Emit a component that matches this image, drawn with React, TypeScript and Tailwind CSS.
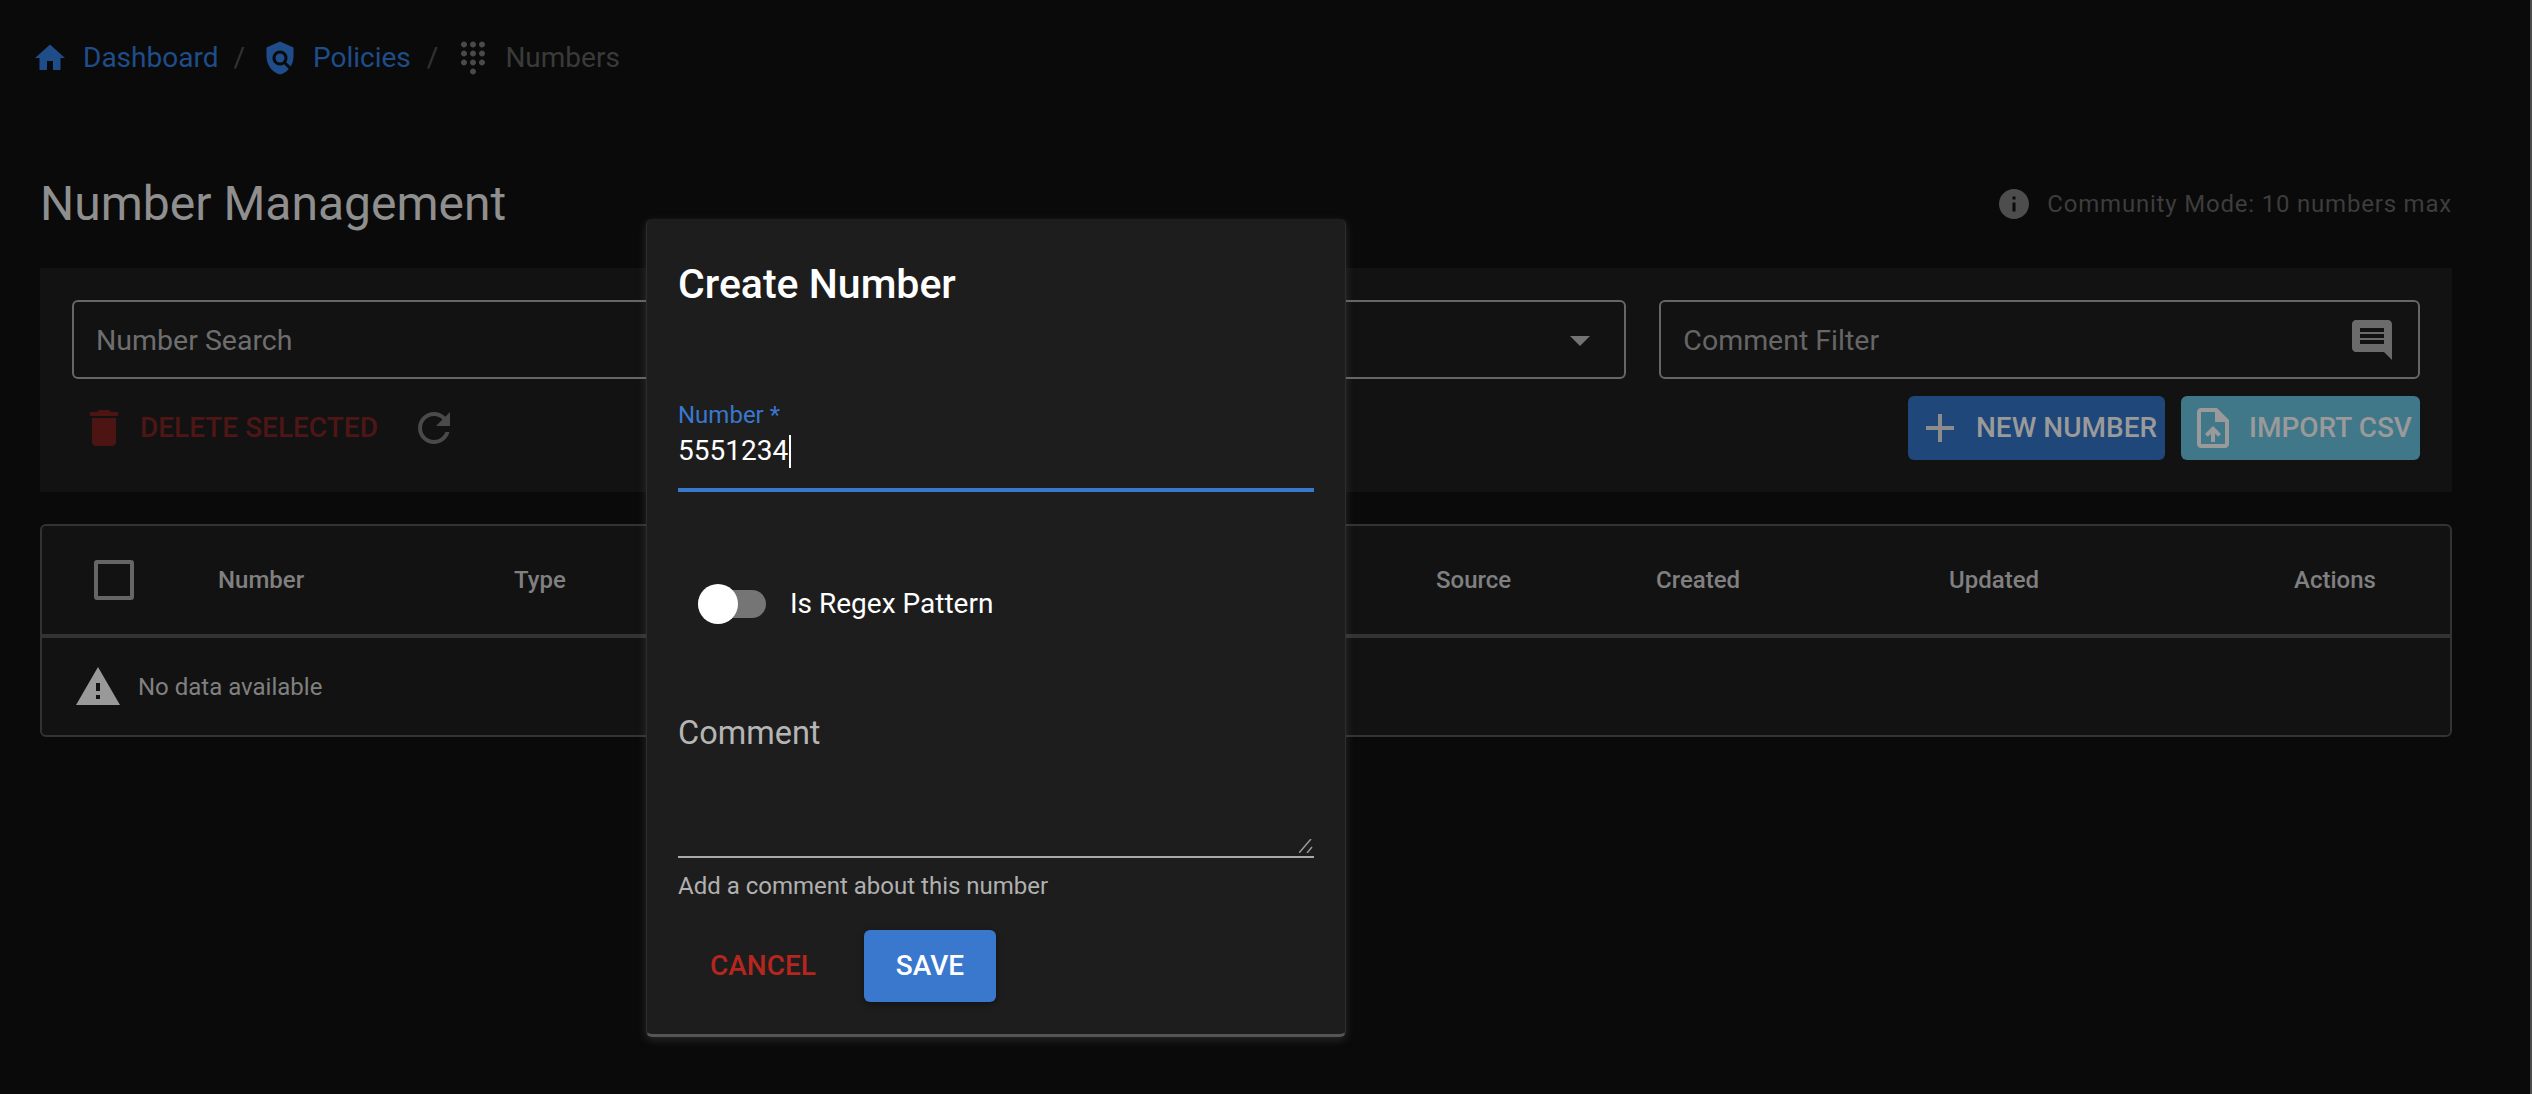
const Icon = ({ d, size = 48, className = "", children }: { d: string; size?: number; className?: string; children?: React.ReactNode }) => (
  <svg viewBox="0 0 24 24" width={size} height={size} fill="currentColor" className={`shrink-0 ${className}`}>
    <path d={d} />
    {children}
  </svg>
);

const P = {
  home: "M10 20v-6h4v6h5v-8h3L12 3 2 12h3v8z",
  policy: "M21 5l-9-4-9 4v6c0 5.55 3.84 10.74 9 12 2.3-.56 4.33-1.9 5.88-3.71l-3.12-3.12c-1.94 1.29-4.58 1.07-6.29-.64-1.95-1.95-1.95-5.12 0-7.07 1.95-1.95 5.12-1.95 7.07 0 1.71 1.71 1.92 4.35.64 6.29l2.9 2.9C20.29 15.69 21 13.38 21 11V5z",
  dialpad: "M12 19c-1.1 0-2 .9-2 2s.9 2 2 2 2-.9 2-2-.9-2-2-2zM6 1c-1.1 0-2 .9-2 2s.9 2 2 2 2-.9 2-2-.9-2-2-2zm0 6c-1.1 0-2 .9-2 2s.9 2 2 2 2-.9 2-2-.9-2-2-2zm0 6c-1.1 0-2 .9-2 2s.9 2 2 2 2-.9 2-2-.9-2-2-2zm12-8c1.1 0 2-.9 2-2s-.9-2-2-2-2 .9-2 2 .9 2 2 2zm-6 8c-1.1 0-2 .9-2 2s.9 2 2 2 2-.9 2-2-.9-2-2-2zm6 0c-1.1 0-2 .9-2 2s.9 2 2 2 2-.9 2-2-.9-2-2-2zm0-6c-1.1 0-2 .9-2 2s.9 2 2 2 2-.9 2-2-.9-2-2-2zm-6 0c-1.1 0-2 .9-2 2s.9 2 2 2 2-.9 2-2-.9-2-2-2zm0-6c-1.1 0-2 .9-2 2s.9 2 2 2 2-.9 2-2-.9-2-2-2z",
  info: "M12 2C6.48 2 2 6.48 2 12s4.48 10 10 10 10-4.48 10-10S17.52 2 12 2zm1 15h-2v-6h2v6zm0-8h-2V7h2v2z",
  comment: "M21.99 4c0-1.1-.89-2-1.99-2H4c-1.1 0-2 .9-2 2v12c0 1.1.9 2 2 2h14l4 4-.01-18zM18 14H6v-2h12v2zm0-3H6V9h12v2zm0-3H6V6h12v2z",
  del: "M6 19c0 1.1.9 2 2 2h8c1.1 0 2-.9 2-2V7H6v12zM19 4h-3.5l-1-1h-5l-1 1H5v2h14V4z",
  refresh: "M17.65 6.35C16.2 4.9 14.21 4 12 4c-4.42 0-7.99 3.58-7.99 8s3.57 8 7.99 8c3.73 0 6.84-2.55 7.73-6h-2.08c-.82 2.33-3.04 4-5.65 4-3.31 0-6-2.69-6-6s2.69-6 6-6c1.66 0 3.14.69 4.22 1.78L13 11h7V4l-2.35 2.35z",
  add: "M19 13h-6v6h-2v-6H5v-2h6V5h2v6h6v2z",
  upload: "M14 2H6c-1.1 0-1.99.9-1.99 2L4 20c0 1.1.89 2 1.99 2H18c1.1 0 2-.9 2-2V8l-6-6zm4 18H6V4h7v5h5v11zM8 15.01l1.41 1.41L11 14.84V19h2v-4.16l1.59 1.59L16 15.01 12.01 11 8 15.01z",
  warning: "M1 21h22L12 2 1 21zm12-3h-2v-2h2v2zm0-4h-2v-4h2v4z",
  arrow: "M7 10l5 5 5-5z",
};

export default function App() {
  return (
    <div className="relative flex w-[2532px] h-[1094px] overflow-hidden bg-[#0a0a0a] font-['Roboto',sans-serif]">
      <main className="flex-1 flex flex-col pl-[40px] pr-[78px]">
        {/* Breadcrumb */}
        <nav className="flex items-center h-[36px] mt-[40px] -ml-[8px] text-[28px] text-[#1f4d8a]">
          <Icon d={P.home} size={36} className="text-[#1f4d8a]" />
          <span className="ml-[15px]">Dashboard</span>
          <span className="ml-[15px] mr-[17px] text-[#333333]">/</span>
          <Icon d={P.policy} size={36} className="text-[#1f4d8a]">
            <circle cx="12" cy="12" r="3" />
          </Icon>
          <span className="ml-[15px]">Policies</span>
          <span className="ml-[16px] mr-[17px] text-[#333333]">/</span>
          <Icon d={P.dialpad} size={36} className="text-[#4a4a4a]" />
          <span className="ml-[14px] text-[#3a3a3a]">Numbers</span>
        </nav>

        {/* Title row */}
        <div className="flex items-center justify-between mt-[98px] h-[60px]">
          <h1 className="text-[48px] leading-[60px] font-normal text-[#8f8f8f]">Number Management</h1>
          <div className="flex items-center text-[24px] tracking-[0.8px] text-[#3d3d3d]">
            <Icon d={P.info} size={36} className="text-[#4d4d4d]" />
            <span className="ml-[15px]">Community Mode: 10 numbers max</span>
          </div>
        </div>

        {/* Filter panel */}
        <section className="mt-[34px] h-[224px] bg-[#121212] px-[32px] pt-[32px]">
          <div className="grid grid-cols-3 gap-[33px]">
            <div className="flex items-center h-[79px] rounded-[6px] border-2 border-[#666666] px-[22px] pt-[3px] text-[28.5px] text-[#6e6e6e]">Number Search</div>
            <div className="flex items-center justify-end h-[79px] rounded-[6px] border-2 border-[#666666] pr-[20px] text-[#737373]">
              <Icon d={P.arrow} />
            </div>
            <div className="flex items-center justify-between h-[79px] rounded-[6px] border-2 border-[#666666] pl-[22px] pr-[22px] text-[28.5px] text-[#666666]">
              <span className="pt-[3px]">Comment Filter</span>
              <Icon d={P.comment} className="text-[#6b6b6b]" />
            </div>
          </div>
          <div className="flex items-start justify-between mt-[17px]">
            <div className="flex items-center h-[64px]">
              <Icon d={P.del} className="ml-[8px] text-[#4d1414]" />
              <span className="ml-[12px] text-[28px] font-medium text-[#4f1616]">DELETE SELECTED</span>
              <Icon d={P.refresh} className="ml-[32px] text-[#4a4a4a]" />
            </div>
            <div className="flex items-center gap-[16px]">
              <div className="flex items-center h-[64px] w-[257px] rounded-[6px] bg-[#1f4779] pl-[8px] text-[#9a9a9a]">
                <Icon d={P.add} className="text-[#8c8c8c]" />
                <span className="ml-[12px] text-[28px] font-medium whitespace-nowrap">NEW NUMBER</span>
              </div>
              <div className="flex items-center h-[64px] w-[239px] rounded-[6px] bg-[#40788a] pl-[8px] text-[#9a9a9a]">
                <Icon d={P.upload} />
                <span className="ml-[12px] text-[28px] font-medium whitespace-nowrap">IMPORT CSV</span>
              </div>
            </div>
          </div>
        </section>

        {/* Table */}
        <section className="mt-[32px] h-[213px] rounded-[6px] border-2 border-[#333333] bg-[#121212]">
          <div className="flex items-center h-[112px] border-b-4 border-[#333333] text-[24px] font-medium text-[#808080]">
            <div className="ml-[52px] w-[40px] h-[40px] rounded-[3px] border-4 border-[#666666]" />
            <div className="ml-[84px] w-[296px]">Number</div>
            <div className="w-[922px]">Type</div>
            <div className="w-[220px]">Source</div>
            <div className="w-[293px]">Created</div>
            <div className="w-[345px]">Updated</div>
            <div>Actions</div>
          </div>
          <div className="flex items-center h-[97px] pl-[32px] text-[24px] text-[#808080]">
            <Icon d={P.warning} className="text-[#999999]" />
            <span className="ml-[16px]">No data available</span>
          </div>
        </section>
      </main>
      <div className="w-[2px] bg-[#4a4a4a]" />

      {/* Dialog */}
      <div className="absolute left-[646px] top-[219px] w-[700px] h-[818px] flex flex-col rounded-[6px] bg-[#1d1d1d] pl-[31px] pr-[31px] border-x border-[#2e2e2e] border-b-[3px] border-b-[#555555] shadow-[0_3px_10px_rgba(110,110,110,0.3)]">
        <h2 className="mt-[41px] h-[48px] text-[41px] leading-[48px] font-medium text-white">Create Number</h2>
        <div className="mt-[93px] h-[28px] text-[24px] leading-[28px] text-[#3a78ce]">Number *</div>
        <div className="mt-[4px] flex items-center h-[36px] text-[28px] text-white">
          5551234
          <span className="ml-[1px] w-[2px] h-[33px] bg-white" />
        </div>
        <div className="mt-[19px] h-[4px] bg-[#3a78ce]" />

        <div className="mt-[92px] flex items-center h-[40px]">
          <div className="relative ml-[20px] w-[68px] h-[28px] rounded-full bg-[#757575]">
            <div className="absolute left-0 -top-[6px] w-[40px] h-[40px] rounded-full bg-white" />
          </div>
          <span className="ml-[24px] text-[28px] text-white">Is Regex Pattern</span>
        </div>

        <div className="mt-[91px] h-[36px] text-[32.5px] leading-[36px] text-[#b5b5b5]">Comment</div>
        <div className="relative mt-[105px] h-[2px] bg-[#aaaaaa]">
          <svg viewBox="0 0 14 14" width="14" height="14" className="absolute right-[1px] -top-[17px] text-[#999999]" stroke="currentColor" strokeWidth="1.5">
            <path d="M0 14L12 0M8 14L13 8" />
          </svg>
        </div>
        <div className="mt-[13px] h-[30px] text-[24px] leading-[30px] text-[#b0b0b0]">Add a comment about this number</div>

        <div className="mt-[29px] flex items-center">
          <span className="ml-[32px] text-[28px] font-medium text-[#b5261f]">CANCEL</span>
          <div className="ml-[48px] flex items-center justify-center w-[132px] h-[72px] rounded-[6px] bg-[#3a78ce] text-[28px] font-medium text-white shadow-[0_2px_6px_rgba(0,0,0,0.4)]">SAVE</div>
        </div>
      </div>
    </div>
  );
}
